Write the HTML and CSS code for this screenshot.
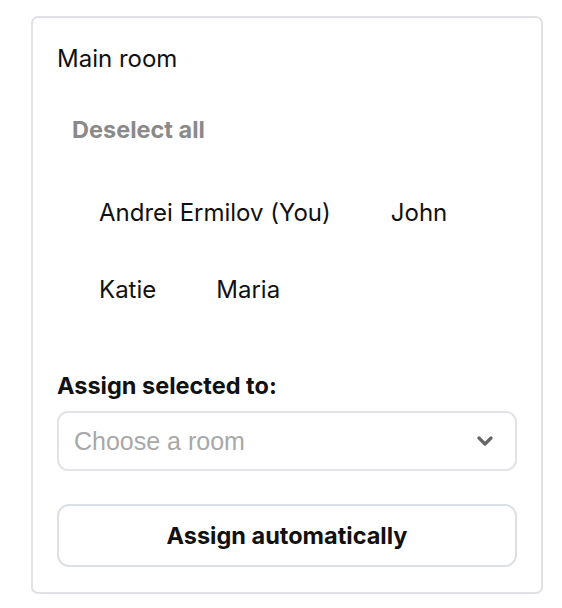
FILE: index.html
```html
<!DOCTYPE html>
<html lang="en">

<head>
    <meta charset="UTF-8">
    <meta name="viewport" content="width=device-width, initial-scale=1.0">
    <title>Breakout rooms</title>
    <link rel="stylesheet" href="styles.css">
</head>

<body>
    <div class="panel">
        <h2 class="room-title">Main room</h2>

        <button class="deselect">Deselect all</button>

        <ul class="people">
            <li>Andrei Ermilov (You)</li>
            <li>John</li>
            <li>Katie</li>
            <li>Maria</li>
        </ul>

        <label class="assign-label" for="roomSelect">Assign selected to:</label>
        <div class="select">
            <span class="placeholder" id="roomSelect">Choose a room</span>
            <svg class="chevron" width="16" height="10" viewBox="0 0 16 10">
                <path d="M2 2l6 6 6-6" fill="none" stroke="#666" stroke-width="3.2" stroke-linecap="round" stroke-linejoin="round" />
            </svg>
        </div>

        <button class="assign-auto">Assign automatically</button>
    </div>
</body>

</html>
```

FILE: styles.css
```css
body {
    font-family: Inter, 'Noto Sans', sans-serif;
    margin: 0;
    background: #fff;
    color: #111;
}

.panel {
    width: 512px;
    box-sizing: border-box;
    margin: 16px 0 0 31px;
    padding: 28px 24px 25px;
    border: 2px solid #dfe1e5;
    border-radius: 7px;
    display: flex;
    flex-direction: column;
}

.room-title {
    margin: 0;
    font-size: 24px;
    font-weight: 400;
    line-height: 26px;
}

.deselect {
    align-self: flex-start;
    margin: 45px 0 0 15px;
    padding: 0;
    border: none;
    background: none;
    font-family: inherit;
    font-size: 23.5px;
    font-weight: 700;
    line-height: 26px;
    color: #8a8a8a;
    cursor: pointer;
}

.people {
    list-style: none;
    margin: 44px 0 0;
    padding: 0 0 0 42px;
    display: flex;
    flex-wrap: wrap;
    column-gap: 60px;
    row-gap: 25px;
}

.people li {
    padding: 13px 0;
    font-size: 24px;
    line-height: 26px;
}

.assign-label {
    margin-top: 57px;
    font-size: 23.5px;
    font-weight: 700;
    line-height: 26px;
}

.select {
    margin-top: 12px;
    height: 60px;
    box-sizing: border-box;
    border: 2px solid #e2e3e6;
    border-radius: 11px;
    padding: 0 22px 0 15px;
    display: flex;
    align-items: center;
    justify-content: space-between;
}

.placeholder {
    font-family: 'Liberation Sans', Arial, sans-serif;
    font-size: 25px;
    color: #a8a8a8;
}

.assign-auto {
    margin-top: 33px;
    height: 63px;
    border: 2px solid #dcdfe4;
    border-radius: 12px;
    background: #fff;
    font-family: inherit;
    font-size: 23.5px;
    font-weight: 700;
    color: #111;
    cursor: pointer;
}
```
